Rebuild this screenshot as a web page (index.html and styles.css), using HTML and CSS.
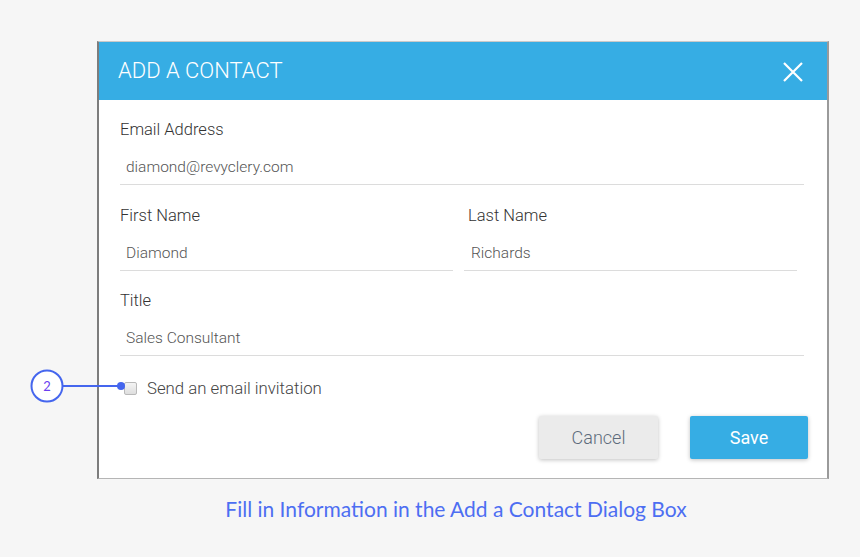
FILE: index.html
```html
<!DOCTYPE html>
<html>
  <head>
    <title>Add a Contact</title>
    <link rel="stylesheet" href="styles.css">
  </head>
  <body>
    <div class="stage">
      <div class="dialog">
        <div class="dialog-header">
          <span class="dialog-title">ADD A CONTACT</span>
          <svg class="close" width="22" height="22" viewBox="0 0 22 22">
            <path d="M2 2 L20 20 M20 2 L2 20" stroke="#fff" stroke-width="2.2" fill="none"/>
          </svg>
        </div>
        <div class="dialog-body">
          <div class="field">
            <div class="label">Email Address</div>
            <div class="input">diamond@revyclery.com</div>
          </div>
          <div class="field-row">
            <div class="field">
              <div class="label">First Name</div>
              <div class="input">Diamond</div>
            </div>
            <div class="field field-right">
              <div class="label">Last Name</div>
              <div class="input">Richards</div>
            </div>
          </div>
          <div class="field">
            <div class="label">Title</div>
            <div class="input">Sales Consultant</div>
          </div>
          <div class="check-row">
            <span class="checkbox"></span>
            <span class="check-label">Send an email invitation</span>
          </div>
          <div class="buttons">
            <button class="btn btn-cancel">Cancel</button>
            <button class="btn btn-save">Save</button>
          </div>
        </div>
      </div>

      <!-- callout marker over the dialog edge -->
      <svg class="callout" width="130" height="40" viewBox="0 0 130 40">
        <circle cx="17" cy="19" r="15.5" stroke="#4566ee" stroke-width="2" fill="#fff"/>
        <text x="17" y="24" text-anchor="middle" font-family="Lato, sans-serif" font-size="13" fill="#6a3ff0">2</text>
        <line x1="33" y1="19" x2="90" y2="19" stroke="#4566ee" stroke-width="2"/>
        <circle cx="91" cy="19" r="4" fill="#4566ee"/>
      </svg>

      <div class="caption">Fill in Information in the Add a Contact Dialog Box</div>
    </div>
  </body>
</html>
```

FILE: styles.css
```css
body {
  margin: 0;
  padding: 0;
  background: #f6f6f6;
  font-family: Roboto, "Liberation Sans", sans-serif;
}
.stage {
  position: relative;
  padding: 41px 0 0 97px;
  width: 732px;
}
.dialog {
  width: 732px;
  box-sizing: border-box;
  background: #fff;
  border-top: 1px solid #c9c9c9;
  border-left: 2px solid #7d7d7d;
  border-right: 2px solid #9a9a9a;
  border-bottom: 1px solid #b5b5b5;
}
.dialog-header {
  height: 58px;
  background: #36ade4;
  display: flex;
  align-items: center;
  justify-content: space-between;
  padding: 0 23px 0 19px;
}
.dialog-title {
  color: #fff;
  font-size: 22px;
  font-weight: 300;
  margin-top: -1px;
}
.close {
  display: block;
  margin-top: 1px;
}
.dialog-body {
  padding: 20px 23px 19px 21px;
}
.field {
  margin-bottom: 21px;
}
.field-row .field {
  margin-bottom: 20px;
}
.label {
  font-size: 16.5px;
  font-weight: 300;
  line-height: 20px;
  color: #333;
  margin-bottom: 17px;
}
.input {
  font-size: 15.5px;
  font-weight: 300;
  line-height: 20px;
  color: #555;
  padding: 0 0 7px 6px;
  border-bottom: 1px solid #dcdcdc;
}
.field-row {
  display: flex;
  gap: 11px;
  padding-right: 7px;
}
.field-row .field {
  flex: 1;
}
.field-right .label {
  padding-left: 4px;
}
.field-right .input {
  padding-left: 7px;
}
.check-row {
  display: flex;
  align-items: center;
  margin-top: 22px;
  height: 20px;
}
.checkbox {
  width: 11px;
  height: 11px;
  border: 1px solid #b9b9b9;
  border-radius: 2px;
  background: linear-gradient(#f4f4f4, #dedede);
  margin: 1px 10px 0 4px;
}
.check-label {
  font-size: 16.8px;
  font-weight: 300;
  color: #444;
}
.buttons {
  display: flex;
  justify-content: flex-end;
  gap: 32px;
  margin-top: 18px;
  margin-right: -4px;
}
.btn {
  height: 43px;
  width: 119px;
  border: none;
  border-radius: 2px;
  font-family: Roboto, "Liberation Sans", sans-serif;
  font-size: 18px;
  font-weight: 300;
  box-shadow: 0 1px 4px rgba(0,0,0,0.25);
}
.btn-cancel {
  background: #ebebeb;
  color: #5e6b7c;
}
.btn-save {
  background: #36ade4;
  color: #fff;
  width: 118px;
  font-weight: 400;
}
.callout {
  position: absolute;
  left: 30px;
  top: 367px;
}
.caption {
  margin-top: 18px;
  padding-right: 14px;
  text-align: center;
  font-family: Lato, "Open Sans", sans-serif;
  font-size: 21px;
  line-height: 24px;
  color: #4d6ef2;
}
```
